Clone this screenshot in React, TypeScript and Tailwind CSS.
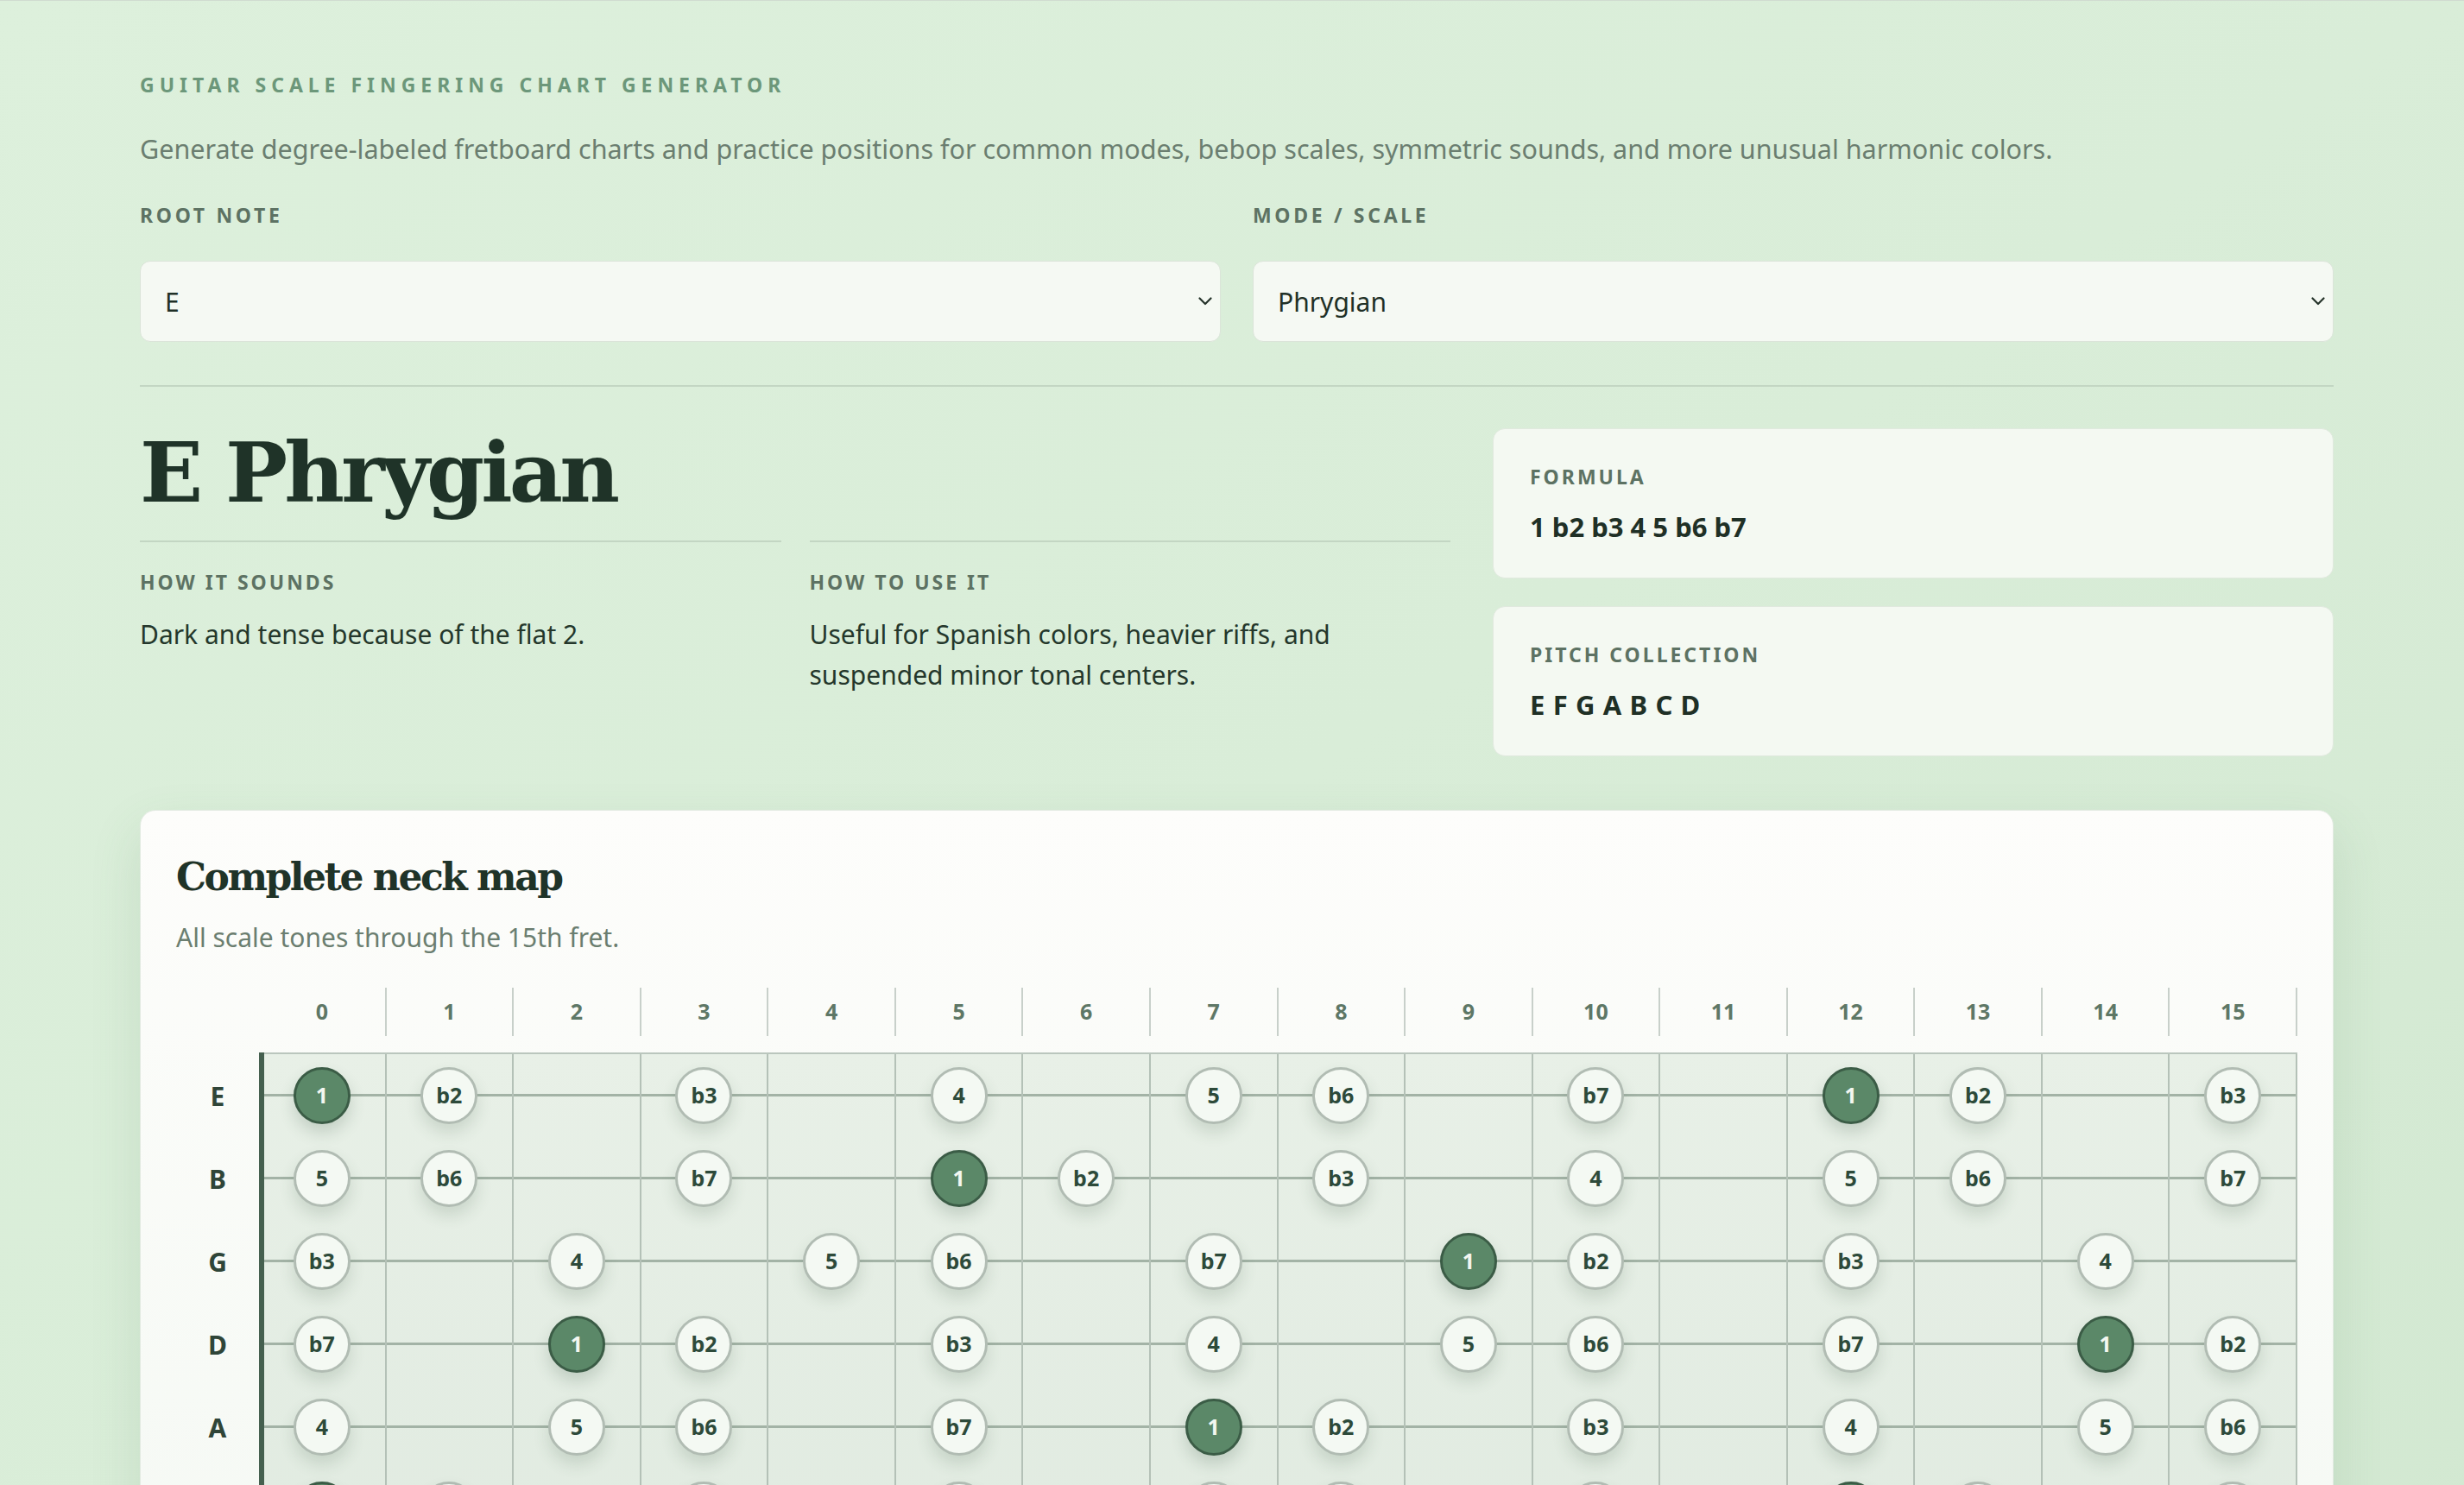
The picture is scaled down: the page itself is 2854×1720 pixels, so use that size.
import React from "react";

type StringDef = { name: string; pc: number };

const strings: StringDef[] = [
  { name: "E", pc: 4 },
  { name: "B", pc: 11 },
  { name: "G", pc: 7 },
  { name: "D", pc: 2 },
  { name: "A", pc: 9 },
  { name: "E", pc: 4 },
];

const ROOT = 4;
const degrees: Record<number, string> = { 0: "1", 1: "b2", 3: "b3", 5: "4", 7: "5", 8: "b6", 10: "b7" };
const frets = Array.from({ length: 16 }, (_, i) => i);

function Chevron() {
  return (
    <svg
      width="16"
      height="10"
      viewBox="0 0 16 10"
      className="pointer-events-none absolute right-[10px] top-1/2 -translate-y-1/2"
    >
      <path d="M1.5 1.5l6.5 6.5 6.5-6.5" fill="none" stroke="#25332a" strokeWidth="2.2" strokeLinecap="round" strokeLinejoin="round" />
    </svg>
  );
}

function Field({ label, value, options }: { label: string; value: string; options: string[] }) {
  return (
    <label className="block">
      <span className="block text-[23px] font-bold leading-[30px] tracking-[0.16em] text-[#5d7263]">{label}</span>
      <div className="relative mt-[38px]">
        <select
          defaultValue={value}
          className="h-[94px] w-full appearance-none rounded-[12px] border border-[#dbe4d9] bg-[#f5f9f3] pl-[28px] text-[30px] text-[#1f3026] outline-none"
        >
          {options.map((o) => (
            <option key={o}>{o}</option>
          ))}
        </select>
        <Chevron />
      </div>
    </label>
  );
}

function Dot({ label }: { label: string }) {
  const root = label === "1";
  return (
    <span
      className={
        root
          ? "flex h-[66px] w-[66px] items-center justify-center rounded-full border-[3px] border-[#3b5c46] bg-[#5b8868] text-[25px] font-bold text-[#f3f7f1] shadow-[0_10px_18px_rgba(55,85,65,0.2)]"
          : "flex h-[66px] w-[66px] items-center justify-center rounded-full border-[3px] border-[#b1bcb3] bg-[#f4f9f3] text-[25px] font-bold text-[#2d4a3a] shadow-[0_10px_18px_rgba(55,85,65,0.16)]"
      }
    >
      {label}
    </span>
  );
}

export default function App() {
  return (
    <div className="min-h-screen border-t border-[#d0dbd0] bg-gradient-to-br from-[#ddf0dc] via-[#d9edd8] to-[#d2e8d1] font-['Noto_Sans',sans-serif]">
      <main className="pl-[162px] pr-[151px] pb-[80px] pt-[82px]">
        <p className="text-[23px] font-bold leading-[30px] tracking-[0.26em] text-[#6c977a]">
          GUITAR SCALE FINGERING CHART GENERATOR
        </p>
        <p className="mt-[37px] text-[30.5px] leading-[44px] text-[#6b7e70]">
          Generate degree-labeled fretboard charts and practice positions for common modes, bebop scales, symmetric
          sounds, and more unusual harmonic colors.
        </p>

        <div className="mt-[40px] grid grid-cols-2 gap-[37px]">
          <Field label="ROOT NOTE" value="E" options={["C", "C#", "D", "Eb", "E", "F", "F#", "G", "Ab", "A", "Bb", "B"]} />
          <Field label="MODE / SCALE" value="Phrygian" options={["Ionian", "Dorian", "Phrygian", "Lydian", "Mixolydian", "Aeolian", "Locrian"]} />
        </div>

        <div className="mt-[50px] border-t-2 border-[#c3d6c3]" />

        <div className="mt-[48px] grid grid-cols-[1fr_974px] gap-[49px]">
          <div>
            <h1 className="pt-[2px] font-['DejaVu_Serif',serif] text-[96px] font-bold leading-[100px] tracking-[-0.04em] text-[#1f3328]">
              E Phrygian
            </h1>
            <div className="mt-[28px] grid grid-cols-2 gap-[33px]">
              <div className="border-t-2 border-[#c3d6c3] pt-[31px]">
                <p className="text-[23px] font-bold leading-[30px] tracking-[0.13em] text-[#5d7263]">HOW IT SOUNDS</p>
                <p className="mt-[22px] text-[30px] leading-[47px] text-[#24372b]">Dark and tense because of the flat 2.</p>
              </div>
              <div className="border-t-2 border-[#c3d6c3] pt-[31px]">
                <p className="text-[23px] font-bold leading-[30px] tracking-[0.13em] text-[#5d7263]">HOW TO USE IT</p>
                <p className="mt-[22px] text-[30px] leading-[47px] text-[#24372b]">
                  Useful for Spanish colors, heavier riffs, and suspended minor tonal centers.
                </p>
              </div>
            </div>
          </div>

          <div className="flex flex-col gap-[32px]">
            <div className="h-[174px] rounded-[14px] border border-[#e0e9de] bg-[#f4f9f2] pl-[42px] pt-[40px]">
              <p className="text-[23px] font-bold leading-[30px] tracking-[0.13em] text-[#5d7263]">FORMULA</p>
              <p className="mt-[23px] text-[31px] font-bold leading-[40px] text-[#1f3026]">1 b2 b3 4 5 b6 b7</p>
            </div>
            <div className="h-[174px] rounded-[14px] border border-[#e0e9de] bg-[#f4f9f2] pl-[42px] pt-[40px]">
              <p className="text-[23px] font-bold leading-[30px] tracking-[0.13em] text-[#5d7263]">PITCH COLLECTION</p>
              <p className="mt-[23px] text-[31px] font-bold leading-[40px] tracking-[0.02em] text-[#1f3026]">E F G A B C D</p>
            </div>
          </div>
        </div>

        <section className="mt-[62px] rounded-[18px] border border-[#e2eae1] bg-gradient-to-b from-[#fdfdfb] to-[#f5f9f4] px-[41px] pb-[48px] pt-[49px] shadow-[0_24px_60px_rgba(70,120,80,0.14)]">
          <h2 className="font-['DejaVu_Serif',serif] text-[44px] font-bold leading-[56px] tracking-[-0.056em] text-[#1f3328]">
            Complete neck map
          </h2>
          <p className="mt-[20px] text-[30px] leading-[44px] text-[#6b7e70]">All scale tones through the 15th fret.</p>

          <div className="mt-[36px] grid grid-cols-[96px_repeat(16,minmax(0,1fr))]">
            <div />
            {frets.map((f) => (
              <div
                key={f}
                className="flex h-[56px] items-center justify-center border-r-2 border-[#c8d0ca] text-[25px] font-bold text-[#5e7766]"
              >
                {f}
              </div>
            ))}
          </div>

          <div className="mt-[19px] flex">
            <div className="flex w-[96px] flex-col pt-[2px]">
              {strings.map((s, i) => (
                <div key={i} className="flex h-[96px] items-center justify-center text-[30px] font-bold text-[#2f4538]">
                  {s.name}
                </div>
              ))}
            </div>
            <div className="relative flex-1 border-t-2 border-[#bac6bd] bg-gradient-to-b from-[#e8f0e7] to-[#e1ebe1]">
              <div className="absolute bottom-0 left-0 top-[-2px] z-10 w-[6px] bg-[#45604f]" />
              {strings.map((s, i) => (
                <div
                  key={i}
                  className="grid h-[96px] grid-cols-16 bg-[linear-gradient(to_bottom,transparent_calc(50%-1.5px),#a3b3a6_calc(50%-1.5px),#a3b3a6_calc(50%+1.5px),transparent_calc(50%+1.5px))]"
                >
                  {frets.map((f) => {
                    const d = degrees[(((s.pc + f - ROOT) % 12) + 12) % 12];
                    return (
                      <div key={f} className="flex items-center justify-center border-r-2 border-[#b4c1b7]">
                        {d ? <Dot label={d} /> : null}
                      </div>
                    );
                  })}
                </div>
              ))}
            </div>
          </div>
        </section>
      </main>
    </div>
  );
}
